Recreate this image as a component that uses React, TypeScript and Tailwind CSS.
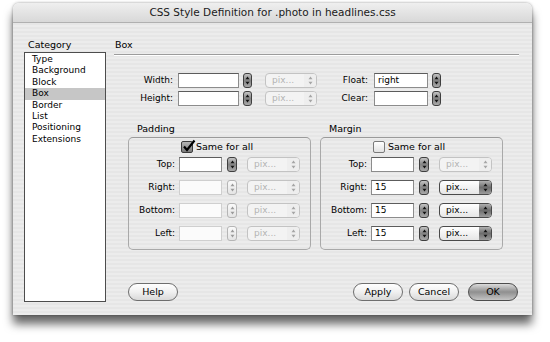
import React from "react";

const FONT = "font-['DejaVu_Sans',sans-serif]";

const categories = [
  "Type",
  "Background",
  "Block",
  "Box",
  "Border",
  "List",
  "Positioning",
  "Extensions",
];

function Arrows({ color }: { color: string }) {
  return (
    <svg width="5" height="9" viewBox="0 0 5 9" className="block">
      <path d="M2.5 0.5 L4.5 3.2 L0.5 3.2 Z" fill={color} />
      <path d="M2.5 8.5 L4.5 5.8 L0.5 5.8 Z" fill={color} />
    </svg>
  );
}

function Stepper({ enabled = true, w = "w-[9px]" }: { enabled?: boolean; w?: string }) {
  return (
    <div
      className={`${w} flex h-[15px] shrink-0 items-center justify-center rounded-[3px] border ${
        enabled
          ? "border-[#3f3f3f] bg-gradient-to-b from-[#c4c4c4] via-[#858585] to-[#a8a8a8]"
          : "border-[#b5b5b5] bg-gradient-to-b from-[#fafafa] to-[#e4e4e4]"
      }`}
    >
      <Arrows color={enabled ? "#111" : "#9a9a9a"} />
    </div>
  );
}

function Select({ enabled = false, w = "w-[52px]" }: { enabled?: boolean; w?: string }) {
  return (
    <div
      className={`${w} flex h-[15px] shrink-0 overflow-hidden rounded-[4px] border ${
        enabled ? "border-[#4a4a4a] bg-gradient-to-b from-white to-[#e6e6e6]" : "border-[#c3c3c3] bg-[#f3f3f3]"
      }`}
    >
      <span
        className={`flex-1 pl-[6px] text-[9px] leading-[13px] ${enabled ? "text-black" : "text-[#b3b3b3]"}`}
      >
        pix...
      </span>
      <span
        className={`flex w-[12px] items-center justify-center ${
          enabled ? "bg-gradient-to-b from-[#b0b0b0] via-[#6e6e6e] to-[#9c9c9c]" : "bg-[#eeeeee]"
        }`}
      >
        <Arrows color={enabled ? "#111" : "#a5a5a5"} />
      </span>
    </div>
  );
}

function Input({ value = "", w, disabled }: { value?: string; w: string; disabled?: boolean }) {
  return (
    <div
      className={`${w} h-[15px] shrink-0 border pl-[3px] text-[9px] leading-[13px] text-black ${
        disabled ? "border-[#cfcfcf] bg-[#fbfbfb]" : "border-[#8c8c8c] border-t-[#5c5c5c] bg-white"
      }`}
    >
      {value}
    </div>
  );
}

function Check({ checked }: { checked: boolean }) {
  return (
    <div
      className={`relative h-[12px] w-[12px] shrink-0 rounded-[2px] border ${
        checked ? "border-[#3c3c3c] bg-gradient-to-b from-[#b5b5b5] to-[#7c7c7c]" : "border-[#7a7a7a] bg-gradient-to-b from-white to-[#e2e2e2]"
      }`}
    >
      {checked ? (
        <svg width="14" height="14" viewBox="0 0 14 14" className="absolute -top-[3px] left-0">
          <path d="M2 7.5 L5 11 L12.5 1.5" stroke="#000" strokeWidth="2.2" fill="none" />
        </svg>
      ) : null}
    </div>
  );
}

function SideRow({
  label,
  value,
  active,
}: {
  label: string;
  value?: string;
  active: boolean;
}) {
  return (
    <div className="flex h-[15px] items-center">
      <span className="w-[50px] pr-[4px] text-right text-[9px] text-black">{label}</span>
      <Input w="w-[43px]" value={value} disabled={!active} />
      <div className="ml-[5px]">
        <Stepper enabled={active} w="w-[10px]" />
      </div>
      <div className="ml-[10px]">
        <Select enabled={active && !!value} w="w-[53px]" />
      </div>
    </div>
  );
}

function SideBox({
  title,
  checked,
  rows,
}: {
  title: string;
  checked: boolean;
  rows: { label: string; value?: string; active: boolean }[];
}) {
  return (
    <div className="w-[183px]">
      <div className="pl-[9px] text-[9.5px] leading-[14px] text-black">{title}</div>
      <div className="mt-[1px] h-[113px] rounded-[5px] border border-[#a9a9a9] border-t-[#9a9a9a]">
        <div className="ml-[52px] mt-[3px] flex items-center gap-[3px]">
          <Check checked={checked} />
          <span className="text-[9.5px] leading-[12px] text-black">Same for all</span>
        </div>
        <div className="mt-[4px] flex flex-col gap-[8px]">
          {rows.map((r) => (
            <SideRow key={r.label} {...r} />
          ))}
        </div>
      </div>
    </div>
  );
}

function Button({ label, primary }: { label: string; primary?: boolean }) {
  return (
    <div
      className={`flex h-[18px] w-[50px] items-center justify-center rounded-full border text-[9.5px] text-black ${
        primary
          ? "border-[#4d4d4d] bg-gradient-to-b from-[#dcdcdc] via-[#8f8f8f] to-[#c4c4c4]"
          : "border-[#6e6e6e] bg-gradient-to-b from-white via-[#f0f0f0] to-[#d9d9d9]"
      }`}
    >
      {label}
    </div>
  );
}

export default function App() {
  return (
    <div className={`h-[342px] w-[550px] overflow-hidden bg-white pl-[13px] pt-[3px] ${FONT}`}>
      <div className="flex h-[312px] w-[519px] flex-col overflow-hidden rounded-t-[6px] shadow-[0_9px_10px_rgba(0,0,0,0.6),0_0_3px_rgba(0,0,0,0.4)]">
        {/* Title bar */}
        <div className="flex h-[20px] shrink-0 items-center justify-center border-b border-[#b0b0b0] bg-gradient-to-b from-[#efefef] to-[#d8d8d8] text-[10.5px] text-[#1a1a1a]">
          CSS Style Definition for .photo in headlines.css
        </div>

        {/* Body */}
        <div className="flex flex-1 bg-[repeating-linear-gradient(0deg,#ececec_0px,#ececec_2px,#e6e6e6_2px,#e6e6e6_4px)] pl-[11px]">
          {/* Category list */}
          <div className="flex w-[82px] flex-col">
            <div className="mt-[16px] pl-[4px] text-[9.5px] leading-[12px] text-black">Category</div>
            <div className="mt-[1px] h-[250px] border border-[#4d4d4d] bg-white pt-[1px]">
              {categories.map((c) => (
                <div
                  key={c}
                  className={`h-[11.4px] pl-[7px] text-[9px] leading-[11.4px] text-black ${
                    c === "Box" ? "bg-[#c6c6c6]" : ""
                  }`}
                >
                  {c}
                </div>
              ))}
            </div>
          </div>

          {/* Box panel */}
          <div className="ml-[8px] flex w-[405px] flex-col">
            <div className="mt-[16px] pl-[1px] text-[9.5px] leading-[12px] text-black">Box</div>
            <div className="mt-[3px] h-[2px] border-t border-b border-t-[#9c9c9c] border-b-white" />

            <div className="mt-[17px] flex flex-col gap-[3px]">
              {[
                { l: "Width:", r: "Float:", rv: "right" },
                { l: "Height:", r: "Clear:", rv: "" },
              ].map((row) => (
                <div key={row.l} className="flex h-[15px] items-center">
                  <span className="w-[59px] text-right text-[9px] text-black">{row.l}</span>
                  <div className="ml-[5px]">
                    <Input w="w-[61px]" />
                  </div>
                  <div className="ml-[4px]">
                    <Stepper />
                  </div>
                  <div className="ml-[13px]">
                    <Select w="w-[52px]" />
                  </div>
                  <span className="ml-[13px] w-[38px] text-right text-[9px] text-black">{row.r}</span>
                  <div className="ml-[6px]">
                    <Input w="w-[54px]" value={row.rv} />
                  </div>
                  <div className="ml-[4px]">
                    <Stepper />
                  </div>
                </div>
              ))}
            </div>

            <div className="ml-[14px] mt-[16px] flex gap-[9px]">
              <SideBox
                title="Padding"
                checked
                rows={[
                  { label: "Top:", active: true },
                  { label: "Right:", active: false },
                  { label: "Bottom:", active: false },
                  { label: "Left:", active: false },
                ]}
              />
              <SideBox
                title="Margin"
                checked={false}
                rows={[
                  { label: "Top:", active: true },
                  { label: "Right:", value: "15", active: true },
                  { label: "Bottom:", value: "15", active: true },
                  { label: "Left:", value: "15", active: true },
                ]}
              />
            </div>

            <div className="ml-[14px] mt-[33px] flex items-center">
              <Button label="Help" />
              <div className="ml-auto mr-[1px] flex items-center">
                <Button label="Apply" />
                <div className="ml-[6px]">
                  <Button label="Cancel" />
                </div>
                <div className="ml-[9px]">
                  <Button label="OK" primary />
                </div>
              </div>
            </div>
          </div>
        </div>
      </div>
    </div>
  );
}
